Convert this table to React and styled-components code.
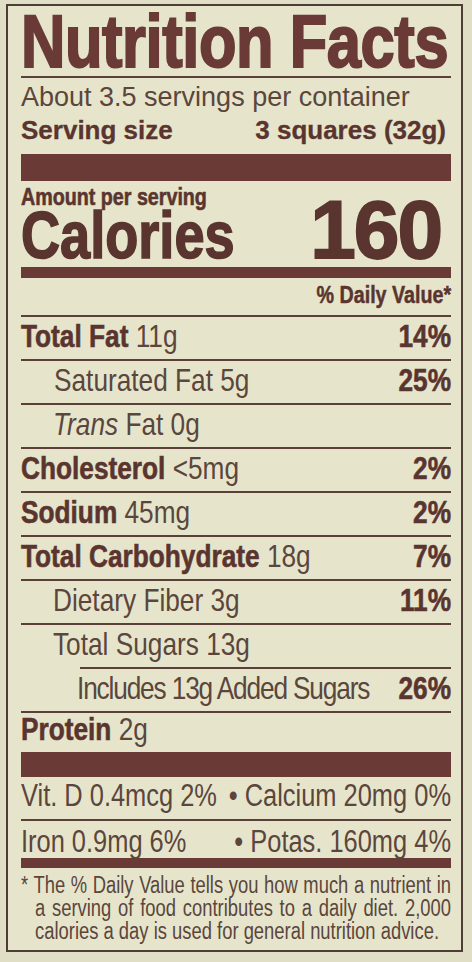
import React from "react";
import styled, { createGlobalStyle } from "styled-components";

const SANS = `"Liberation Sans", Arial, Helvetica, sans-serif`;
const INK = "#6a3a37";
const TEXT = "#5b463d";
const BOLD = "#5a3530";
const RULE = "#5a4038";
const NARROW = 0.82;

const Global = createGlobalStyle`
  html, body { margin: 0; padding: 0; background: #e0dfc5; }
  body { font-family: ${SANS}; color: ${TEXT}; }
`;

const Panel = styled.div`
  box-sizing: border-box;
  width: 457px;
  margin: 4px 0 0 6px;
  border: 2px solid #4e3d35;
  background: #e6e5cb;
  padding: 0 10px 0 13px;
  display: flex;
  flex-direction: column;
  overflow: hidden;
`;

/* emulates a condensed face: the box is widened by 1/s, then squeezed back */
const Condensed = styled.div`
  box-sizing: border-box;
  width: ${(p) => 100 / (p.$s || NARROW)}%;
  transform: scaleX(${(p) => p.$s || NARROW});
  transform-origin: left center;
  flex: none;
`;

const Title = styled(Condensed).attrs({ as: "h1" })`
  margin: 0;
  padding-top: 2px;
  font-weight: 700;
  font-size: 74px;
  line-height: 68px;
  color: ${INK};
  -webkit-text-stroke: 2px ${INK};
  letter-spacing: -0.5px;
  white-space: nowrap;
`;

const Rule = styled.div`
  height: ${(p) => p.$h || 2}px;
  margin-left: ${(p) => p.$inset || 0}px;
  background: ${(p) => (p.$h > 4 ? INK : RULE)};
  flex: none;
`;

const Servings = styled.div`
  font-size: 27px;
  line-height: 27px;
  padding-top: 6px;
  white-space: nowrap;
`;

const ServingSize = styled.div`
  display: flex;
  justify-content: space-between;
  font-weight: 700;
  font-size: 26px;
  line-height: 26px;
  margin-top: 6px;
  margin-bottom: 11px;
  padding-right: 5px;
  color: ${BOLD};
  -webkit-text-stroke: 0.3px ${BOLD};
  white-space: nowrap;
`;

const CalorieBlock = styled.div`
  display: flex;
  justify-content: space-between;
  align-items: last baseline;
  margin-top: 4px;
  margin-bottom: 7px;
  color: ${BOLD};
  font-weight: 700;
`;

const Squeeze = styled.span`
  display: inline-block;
  white-space: nowrap;
  transform: scaleX(${(p) => p.$s || NARROW});
  transform-origin: ${(p) => (p.$right ? "right" : "left")} center;
`;

const Amount = styled.div`
  font-size: 24px;
  line-height: 24px;
  -webkit-text-stroke: 0.6px ${BOLD};
`;

const Calories = styled.div`
  font-size: 66px;
  line-height: 50px;
  padding-top: 1px;
  -webkit-text-stroke: 1.6px ${BOLD};
`;

const CalNumber = styled.div`
  font-size: 82px;
  line-height: 60px;
  letter-spacing: -2px;
  margin-right: 10px;
  -webkit-text-stroke: 1.8px ${BOLD};
`;

const DailyHead = styled.div`
  text-align: right;
  font-weight: 700;
  font-size: 24px;
  line-height: 24px;
  margin-top: 5px;
  margin-bottom: 8px;
  color: ${BOLD};
  -webkit-text-stroke: 0.5px ${BOLD};
`;

const Row = styled(Condensed)`
  display: flex;
  justify-content: space-between;
  height: ${(p) => p.$h || 42}px;
  padding-top: ${(p) => p.$pt ?? 3}px;
  padding-left: ${(p) => (p.$indent || 0) / (p.$s || NARROW)}px;
  font-size: ${(p) => p.$fs || 32}px;
  line-height: ${(p) => p.$fs || 32}px;
  letter-spacing: ${(p) => p.$ls || 0}px;
  white-space: nowrap;
`;

const Label = styled.b`
  font-weight: 700;
  color: ${BOLD};
  -webkit-text-stroke: 0.6px ${BOLD};
`;

const Pct = styled.b`
  font-weight: 700;
  color: ${BOLD};
  letter-spacing: 0;
  -webkit-text-stroke: 0.6px ${BOLD};
`;

const Em = styled.i`
  font-style: italic;
`;

const Footnote = styled(Condensed)`
  font-size: 23px;
  line-height: 23px;
  padding: 6px 0 7px ${14 / 0.8}px;
`;

const FootLine = styled.div`
  text-align: ${(p) => (p.$justify ? "justify" : "left")};
  text-align-last: ${(p) => (p.$justify ? "justify" : "left")};
  text-indent: ${(p) => p.$hang || 0}px;
  white-space: ${(p) => (p.$justify ? "normal" : "nowrap")};
`;

const nutrients = [
  { label: "Total Fat", amount: "11g", pct: "14%" },
  { amount: "Saturated Fat 5g", pct: "25%", indent: 33 },
  { trans: true, indent: 32 },
  { label: "Cholesterol", amount: "<5mg", pct: "2%" },
  { label: "Sodium", amount: "45mg", pct: "2%" },
  { label: "Total Carbohydrate", amount: "18g", pct: "7%" },
  { amount: "Dietary Fiber 3g", pct: "11%", indent: 32 },
  { amount: "Total Sugars 13g", indent: 32, ruleInset: 59 },
  { amount: "Includes 13g Added Sugars", pct: "26%", indent: 56, ls: -1.4 },
];

export default function App() {
  return (
    <>
      <Global />
      <Panel>
        <Title $s={0.83}>Nutrition Facts</Title>
        <Rule />
        <Servings>About 3.5 servings per container</Servings>
        <ServingSize>
          <span>Serving size</span>
          <span>3 squares (32g)</span>
        </ServingSize>
        <Rule $h={27} />
        <CalorieBlock>
          <div>
            <Amount>
              <Squeeze>Amount per serving</Squeeze>
            </Amount>
            <Calories>
              <Squeeze>Calories</Squeeze>
            </Calories>
          </div>
          <CalNumber>160</CalNumber>
        </CalorieBlock>
        <Rule $h={11} />
        <DailyHead>
          <Squeeze $right>% Daily Value*</Squeeze>
        </DailyHead>
        <Rule />
        {nutrients.map((n, i) => (
          <React.Fragment key={i}>
            <Row $indent={n.indent} $ls={n.ls}>
              <span>
                {n.label && <Label>{n.label}</Label>}
                {n.label && " "}
                {n.trans ? (
                  <>
                    <Em>Trans</Em> Fat 0g
                  </>
                ) : (
                  n.amount
                )}
              </span>
              {n.pct && <Pct>{n.pct}</Pct>}
            </Row>
            <Rule $inset={n.ruleInset} />
          </React.Fragment>
        ))}
        <Row $h={39} $pt={0}>
          <span>
            <Label>Protein</Label> 2g
          </span>
        </Row>
        <Rule $h={25} />
        <Row $fs={31} $pt={3}>
          <span>Vit. D 0.4mcg 2%</span>
          <span>• Calcium 20mg 0%</span>
        </Row>
        <Rule />
        <Row $fs={31} $h={37} $pt={5}>
          <span>Iron 0.9mg 6%</span>
          <span>• Potas. 160mg 4%</span>
        </Row>
        <Rule $h={10} />
        <Footnote $s={0.8}>
          <FootLine $justify $hang={-14 / 0.8}>
            * The % Daily Value tells you how much a nutrient in
          </FootLine>
          <FootLine $justify>
            a serving of food contributes to a daily diet. 2,000
          </FootLine>
          <FootLine>calories a day is used for general nutrition advice.</FootLine>
        </Footnote>
      </Panel>
    </>
  );
}
